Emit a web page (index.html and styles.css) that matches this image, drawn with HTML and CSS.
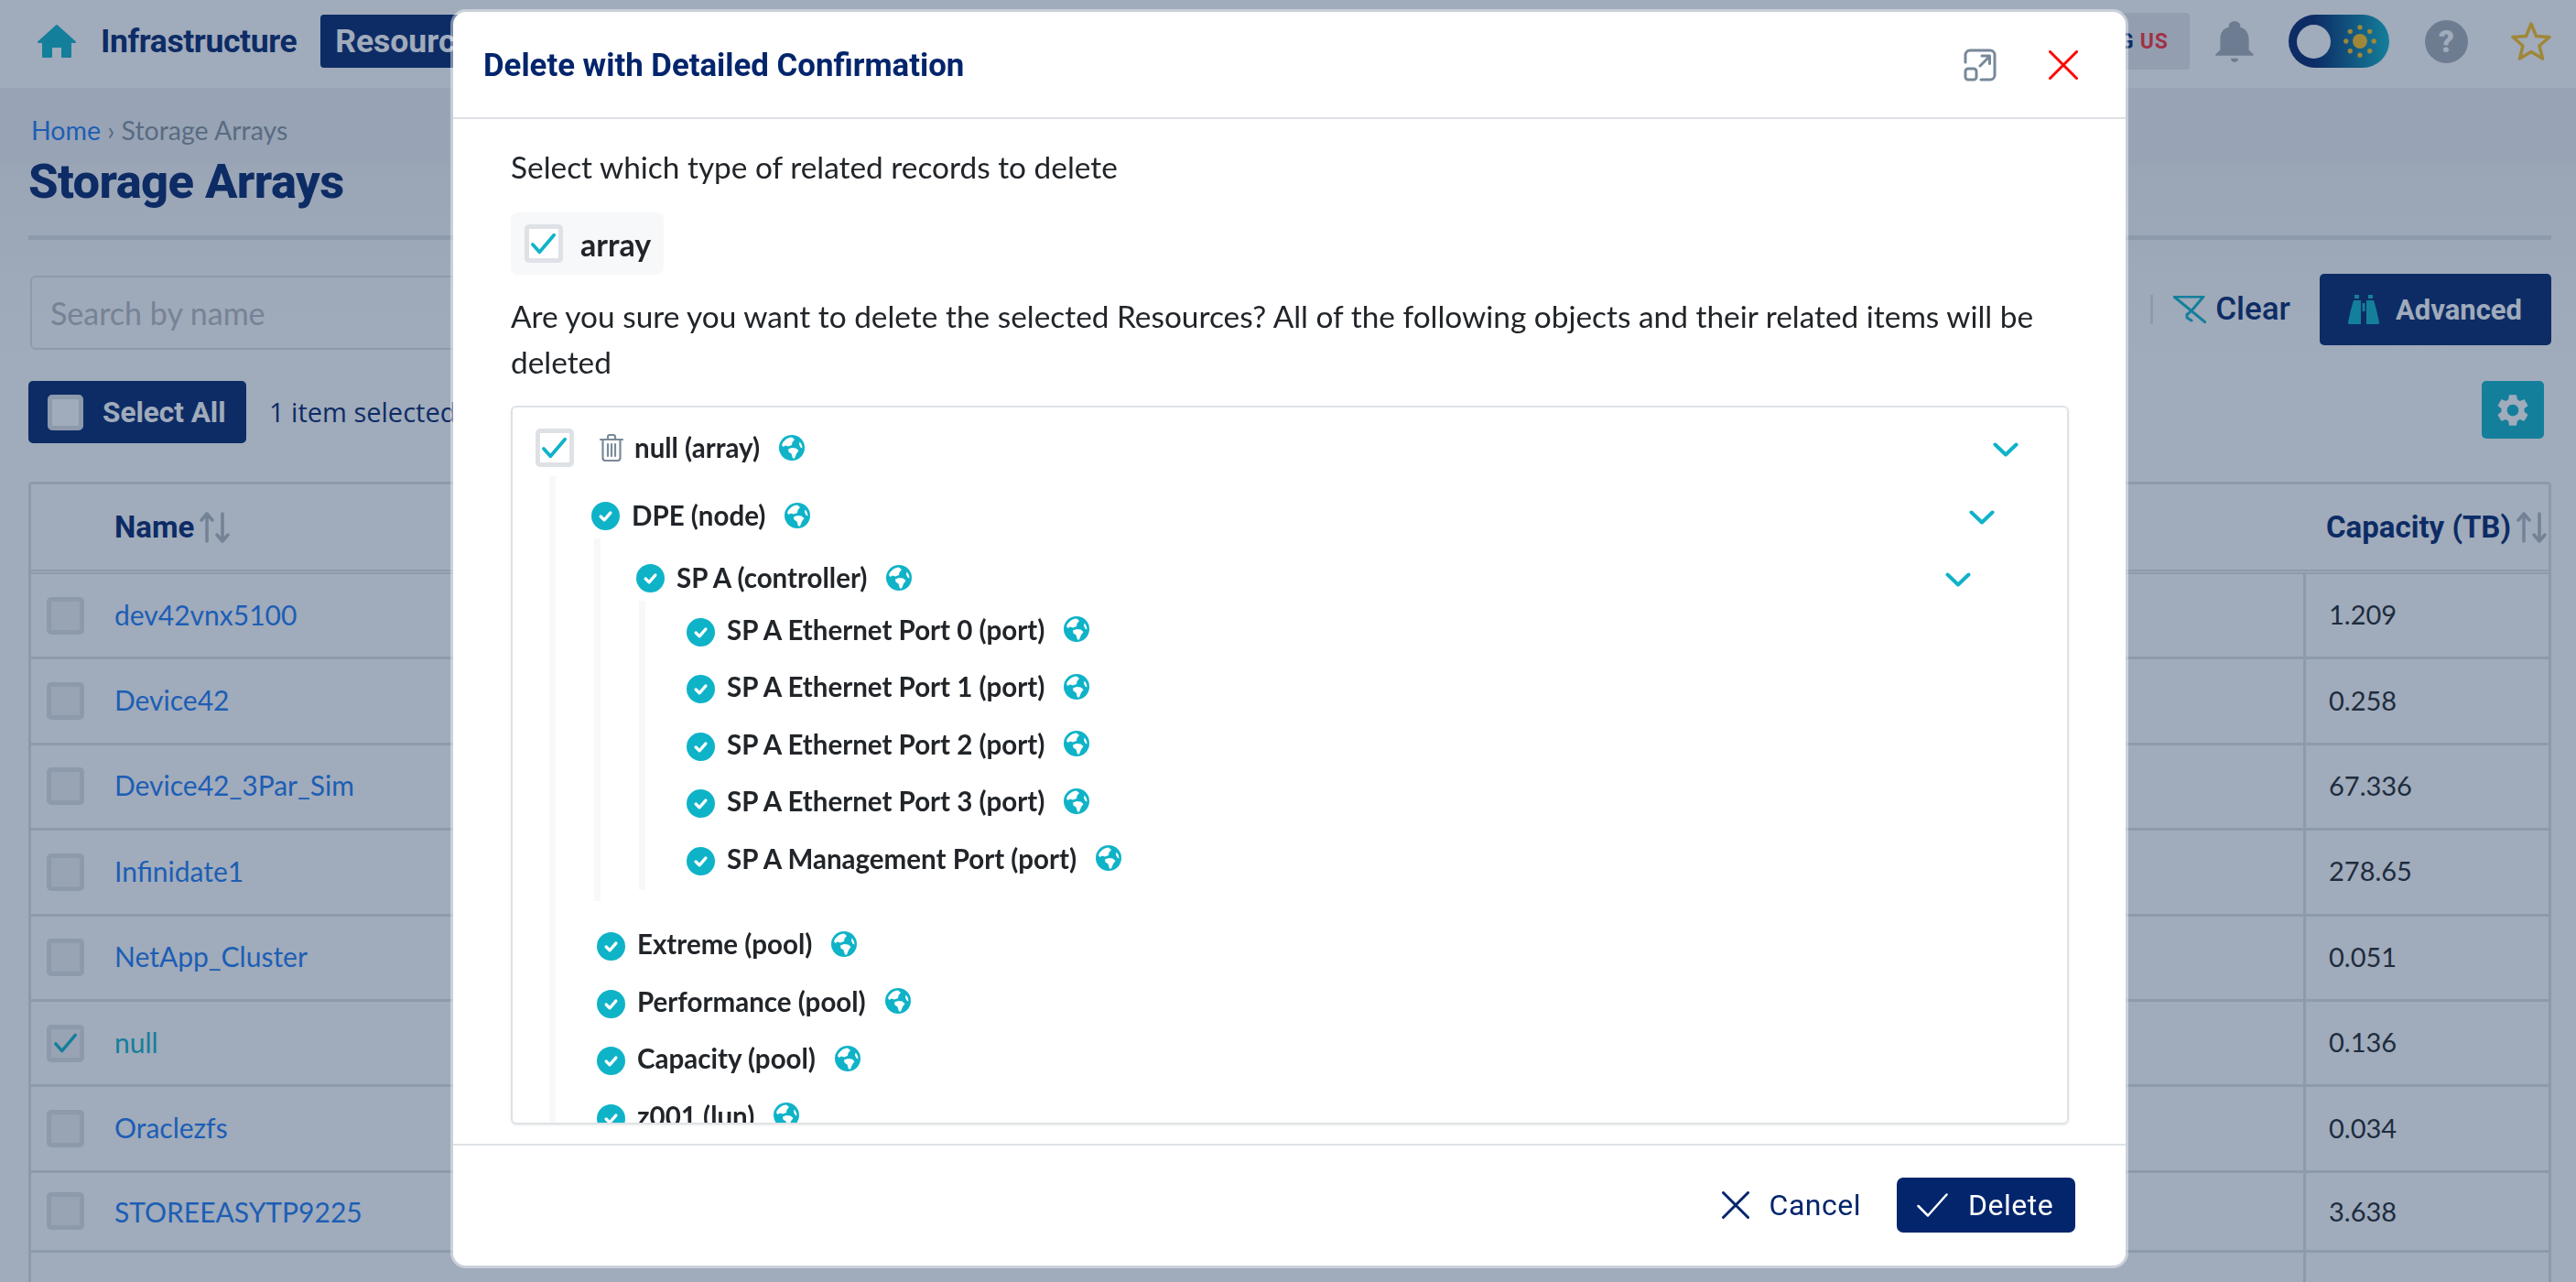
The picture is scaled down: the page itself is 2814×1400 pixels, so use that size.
FILE: index.html
```html
<!DOCTYPE html>
<html lang="en">
<head>
    <meta charset="UTF-8">
    <title>Storage Arrays</title>
    <link rel="stylesheet" href="styles.css">
</head>
<body>
    <!-- Shared icons -->
    <svg class="icon-defs" width="0" height="0">
        <symbol id="globe" viewBox="0 0 28 28">
            <circle cx="14" cy="14" r="14" fill="#0fb3c8"/>
            <path fill="#fff" d="M3 11C5 6 9 3 14 2.600L17 5 14.500 8 14 11 10 12.500 7 11.500 4.500 13zM10 15.500 14 14 18.500 14.500 21.500 17 19 20.500 17 25.500 15 25.500 13.500 20.500 10.500 18.500zM22.500 7.500C24.500 9.500 25.500 12 25.400 14.500L23.500 13.500 22 10.500z"/>
        </symbol>
        <symbol id="tick" viewBox="0 0 32 32">
            <circle cx="16" cy="16" r="16" fill="#0fb3c8"/>
            <path fill="none" stroke="#fff" stroke-width="3.400" stroke-linecap="round" stroke-linejoin="round" d="M10.500 16.500 14.500 20.500 21.500 12.500"/>
        </symbol>
        <symbol id="check" viewBox="0 0 32 28">
            <path fill="none" stroke="currentColor" stroke-width="4" stroke-linecap="round" stroke-linejoin="round" d="M3 15 11 24 28 4"/>
        </symbol>
        <symbol id="chevron" viewBox="0 0 28 16">
            <path fill="none" stroke="#0fb3c8" stroke-width="4" stroke-linecap="round" stroke-linejoin="round" d="M2.500 2.500 14 13.500 25.500 2.500"/>
        </symbol>
        <symbol id="sort" viewBox="0 0 34 36">
            <path fill="none" stroke="#b4b8c0" stroke-width="3.500" stroke-linecap="round" stroke-linejoin="round" d="M8 33V3M2 10 8 3 14 10M25 3V33M19 26 25 33 31 26"/>
        </symbol>
    </svg>

    <!-- Top bar -->
    <header class="topbar">
        <svg class="home-icon" viewBox="0 0 42 38"><path fill="#0fb3c8" stroke="#0fb3c8" stroke-width="2" stroke-linejoin="round" d="M21 2 41 20H36V36H27V25H15V36H6V20H1z"/></svg>
        <span class="app-name">Infrastructure</span>
        <span class="nav-active">Resources</span>
        <span class="locale"><span class="locale-lang">ENG</span> <span class="locale-code">US</span></span>
        <svg class="bell" viewBox="0 0 24 24"><path fill="#aaafb8" d="M12 23c1.100 0 2-.900 2-2h-4c0 1.100.890 2 2 2zm7.500-6.500V11c0-3.070-1.640-5.640-4.500-6.320V3.500c0-.830-1.200-2-3-2s-3 1.170-3 2v1.180C5.630 5.360 4.500 7.920 4.500 11v5.500L2 19v.500h20V19z"/></svg>
        <span class="theme-toggle">
            <span class="theme-knob"></span>
            <svg class="sun" viewBox="0 0 52 52" fill="#ffc21e">
                <circle cx="26" cy="26" r="11.500"/>
                <circle cx="26" cy="4" r="3.800"/><circle cx="26" cy="48" r="3.800"/><circle cx="4" cy="26" r="3.800"/><circle cx="48" cy="26" r="3.800"/>
                <circle cx="10.500" cy="10.500" r="3.800"/><circle cx="41.500" cy="10.500" r="3.800"/><circle cx="10.500" cy="41.500" r="3.800"/><circle cx="41.500" cy="41.500" r="3.800"/>
            </svg>
        </span>
        <span class="help">?</span>
        <svg class="star" viewBox="0 0 44 44"><path fill="none" stroke="#ffc21e" stroke-width="3.500" stroke-linejoin="round" d="M22 3 27.500 16.500 42 17.500 31 27 34.500 41 22 33.500 9.500 41 13 27 2 17.500 16.500 16.500z"/></svg>
    </header>

    <main class="page">
        <div class="page-head">
            <p class="crumbs"><a href="#">Home</a> › Storage Arrays</p>
            <h1>Storage Arrays</h1>
        </div>

        <div class="search-row">
            <div class="search-box">Search by name</div>
            <span class="search-sep"></span>
            <svg class="clear-icon" viewBox="0 0 36 30"><path fill="none" stroke="#0fb3c8" stroke-width="3" stroke-linecap="round" stroke-linejoin="round" d="M1 1H33L22 14 16 20M15 20V24L20 27M1 1 35 29"/></svg>
            <span class="clear-text">Clear</span>
            <button class="btn-advanced">
                <svg viewBox="0 0 34 32"><path fill="#0fb3c8" d="M7 0H12V4H7zM22 0H27V4H22zM6 6H14V32H1C0 32 0 31 0 30 2 20 4 12 6 6zM20 6H28C30 12 32 20 34 30 34 31 34 32 33 32H20zM15.500 9H18.500V18H15.500z"/></svg>
                Advanced
            </button>
        </div>

        <div class="select-row">
            <div class="select-all"><span class="select-box"></span>Select All</div>
            <span class="select-count">1 item selected</span>
            <button class="btn-gear">
                <svg viewBox="0 0 24 24"><path fill="#fff" d="M19.140 12.940c.040-.300.060-.610.060-.940 0-.320-.020-.640-.070-.940l2.030-1.580c.180-.140.230-.410.120-.610l-1.920-3.320c-.120-.220-.370-.290-.590-.220l-2.390.960c-.500-.380-1.030-.700-1.620-.940l-.360-2.540c-.040-.240-.240-.410-.480-.410h-3.840c-.240 0-.430.170-.470.410l-.360 2.540c-.590.240-1.130.570-1.620.940l-2.390-.960c-.220-.080-.470 0-.590.220L2.740 8.870c-.120.210-.080.470.120.610l2.030 1.580c-.050.300-.090.630-.090.940s.020.640.070.940l-2.030 1.580c-.180.140-.230.410-.12.610l1.920 3.320c.120.220.370.290.590.220l2.390-.960c.500.380 1.030.700 1.620.940l.360 2.540c.050.240.240.410.480.410h3.840c.240 0 .440-.170.470-.410l.360-2.540c.590-.240 1.130-.560 1.620-.940l2.390.960c.220.080.470 0 .590-.220l1.920-3.320c.120-.220.070-.470-.120-.610l-2.010-1.580zM12 15.600c-1.980 0-3.600-1.620-3.600-3.600s1.620-3.600 3.600-3.600 3.600 1.620 3.600 3.600-1.620 3.600-3.600 3.600z"/></svg>
            </button>
        </div>

        <!-- Arrays table -->
        <div class="table">
            <div class="row row-head">
                <div class="cell"></div>
                <div class="cell head-name">Name <svg class="sort"><use href="#sort"/></svg></div>
                <div class="cell head-cap">Capacity (TB) <svg class="sort"><use href="#sort"/></svg></div>
            </div>
            <div class="row"><div class="cell"><span class="box"></span></div><div class="cell"><a href="#">dev42vnx5100</a></div><div class="cell cap">1.209</div></div>
            <div class="row"><div class="cell"><span class="box"></span></div><div class="cell"><a href="#">Device42</a></div><div class="cell cap">0.258</div></div>
            <div class="row"><div class="cell"><span class="box"></span></div><div class="cell"><a href="#">Device42_3Par_Sim</a></div><div class="cell cap">67.336</div></div>
            <div class="row"><div class="cell"><span class="box"></span></div><div class="cell"><a href="#">Infinidate1</a></div><div class="cell cap">278.65</div></div>
            <div class="row"><div class="cell"><span class="box"></span></div><div class="cell"><a href="#">NetApp_Cluster</a></div><div class="cell cap">0.051</div></div>
            <div class="row"><div class="cell"><span class="box"><svg class="box-check"><use href="#check"/></svg></span></div><div class="cell"><a class="picked" href="#">null</a></div><div class="cell cap">0.136</div></div>
            <div class="row"><div class="cell"><span class="box"></span></div><div class="cell"><a href="#">Oraclezfs</a></div><div class="cell cap">0.034</div></div>
            <div class="row row-short"><div class="cell"><span class="box"></span></div><div class="cell"><a href="#">STOREEASYTP9225</a></div><div class="cell cap">3.638</div></div>
            <div class="row"><div class="cell"></div><div class="cell"></div><div class="cell cap"></div></div>
        </div>
    </main>

    <!-- Delete dialog -->
    <div class="backdrop">
        <div class="modal">
            <div class="modal-head">
                <h2>Delete with Detailed Confirmation</h2>
                <svg class="modal-expand" viewBox="0 0 36 36"><path fill="none" stroke="#78889a" stroke-width="3" stroke-linecap="round" stroke-linejoin="round" d="M2 15V7A5 5 0 0 1 7 2H29A5 5 0 0 1 34 7V29A5 5 0 0 1 29 34H19M18 19 28 9M20 8H28.500V16.500"/><rect x="2" y="22" width="12" height="12" rx="3" fill="none" stroke="#78889a" stroke-width="3"/></svg>
                <svg class="modal-close" viewBox="0 0 32 32"><path stroke="#f00" stroke-width="3" stroke-linecap="round" d="M1.500 1.500 30.500 30.500M30.500 1.500 1.500 30.500"/></svg>
            </div>

            <div class="modal-body">
                <p class="line">Select which type of related records to delete</p>
                <label class="type-chip"><span class="check-box"><svg><use href="#check"/></svg></span>array</label>
                <p class="line warning">Are you sure you want to delete the selected Resources? All of the following objects and their related items will be deleted</p>

                <div class="tree">
                    <div class="node node-root">
                        <span class="check-box check-box-root"><svg><use href="#check"/></svg></span>
                        <svg class="trash" viewBox="0 0 26 30"><path fill="none" stroke="#7a8a99" stroke-width="2.200" stroke-linecap="round" stroke-linejoin="round" d="M1 6H25M9 6V3A2 2 0 0 1 11 1H15A2 2 0 0 1 17 3V6M3.500 6V26A3 3 0 0 0 6.500 29H19.500A3 3 0 0 0 22.500 26V6M9 11V24M13 11V24M17 11V24"/></svg>
                        <span class="node-name">null (array)</span>
                        <svg class="globe"><use href="#globe"/></svg>
                        <svg class="chevron"><use href="#chevron"/></svg>
                    </div>
                    <div class="branch branch-top">
                        <div class="node node-parent">
                            <svg class="tick"><use href="#tick"/></svg>
                            <span class="node-name">DPE (node)</span>
                            <svg class="globe"><use href="#globe"/></svg>
                            <svg class="chevron"><use href="#chevron"/></svg>
                        </div>
                        <div class="branch branch-mid">
                            <div class="node node-parent">
                                <svg class="tick"><use href="#tick"/></svg>
                                <span class="node-name">SP A (controller)</span>
                                <svg class="globe"><use href="#globe"/></svg>
                                <svg class="chevron"><use href="#chevron"/></svg>
                            </div>
                            <div class="branch branch-leaf">
                                <div class="node"><svg class="tick"><use href="#tick"/></svg><span class="node-name">SP A Ethernet Port 0 (port)</span><svg class="globe"><use href="#globe"/></svg></div>
                                <div class="node"><svg class="tick"><use href="#tick"/></svg><span class="node-name">SP A Ethernet Port 1 (port)</span><svg class="globe"><use href="#globe"/></svg></div>
                                <div class="node"><svg class="tick"><use href="#tick"/></svg><span class="node-name">SP A Ethernet Port 2 (port)</span><svg class="globe"><use href="#globe"/></svg></div>
                                <div class="node"><svg class="tick"><use href="#tick"/></svg><span class="node-name">SP A Ethernet Port 3 (port)</span><svg class="globe"><use href="#globe"/></svg></div>
                                <div class="node"><svg class="tick"><use href="#tick"/></svg><span class="node-name">SP A Management Port (port)</span><svg class="globe"><use href="#globe"/></svg></div>
                            </div>
                        </div>
                        <div class="pools">
                            <div class="node"><svg class="tick"><use href="#tick"/></svg><span class="node-name">Extreme (pool)</span><svg class="globe"><use href="#globe"/></svg></div>
                            <div class="node"><svg class="tick"><use href="#tick"/></svg><span class="node-name">Performance (pool)</span><svg class="globe"><use href="#globe"/></svg></div>
                            <div class="node"><svg class="tick"><use href="#tick"/></svg><span class="node-name">Capacity (pool)</span><svg class="globe"><use href="#globe"/></svg></div>
                            <div class="node"><svg class="tick"><use href="#tick"/></svg><span class="node-name">z001 (lun)</span><svg class="globe"><use href="#globe"/></svg></div>
                        </div>
                    </div>
                </div>
            </div>

            <div class="modal-foot">
                <button class="btn-cancel">
                    <svg viewBox="0 0 30 30"><path stroke="#03256c" stroke-width="3" stroke-linecap="round" d="M1.500 1.500 28.500 28.500M28.500 1.500 1.500 28.500"/></svg>
                    Cancel
                </button>
                <button class="btn-delete">
                    <svg viewBox="0 0 34 26"><path fill="none" stroke="#fff" stroke-width="2.500" stroke-linecap="round" stroke-linejoin="round" d="M1.500 14 12 24.500 32.500 1.500"/></svg>
                    Delete
                </button>
            </div>
        </div>
    </div>
</body>
</html>
```
FILE: styles.css
```css
/* Basic styling for the entire page */
* {
    margin: 0;
    padding: 0;
    box-sizing: border-box;
}

html, body {
    height: 100%;
    overflow: hidden;
}

body {
    background: #fff;
    color: #212529;
    font-family: "Lato", sans-serif;
}

a {
    color: #1c7bf5;
    text-decoration: none;
}

button {
    border: 0;
    background: none;
    font: inherit;
}

.icon-defs {
    position: absolute;
}

/* Top bar */
.topbar {
    height: 96px;
    display: flex;
    align-items: center;
    padding: 0 27px 6px 41px;
    background: #fff;
    font-family: "Roboto", sans-serif;
}

.home-icon {
    width: 42px;
    height: 38px;
    margin-right: 27px;
}

.app-name {
    color: #03256c;
    font-size: 35.5px;
    font-weight: 700;
    letter-spacing: -0.4px;
}

.nav-active {
    margin-left: 26px;
    height: 58px;
    padding: 0 16px;
    display: flex;
    align-items: center;
    background: #03256c;
    border-radius: 4px;
    color: #fff;
    font-size: 35.5px;
    font-weight: 700;
}

.locale {
    margin-left: auto;
    height: 62px;
    width: 200px;
    padding-right: 23px;
    display: flex;
    align-items: center;
    justify-content: flex-end;
    gap: 6px;
    background: #e9e8ec;
    border-radius: 4px;
    font-size: 23px;
    font-weight: 700;
    letter-spacing: 1px;
}

.locale-lang {
    color: #03256c;
}

.locale-code {
    color: #ff2d36;
}

.bell {
    width: 50px;
    height: 52px;
    margin-left: 24px;
}

.theme-toggle {
    width: 110px;
    height: 58px;
    margin-left: 34px;
    padding: 0 9px;
    display: flex;
    align-items: center;
    justify-content: space-between;
    background: linear-gradient(90deg, #03256c 25%, #0fb3c8 100%);
    border-radius: 29px;
}

.theme-knob {
    width: 37px;
    height: 37px;
    border-radius: 50%;
    background: #fff;
}

.sun {
    width: 36px;
    height: 36px;
    margin-right: 5px;
}

.help {
    width: 47px;
    height: 47px;
    margin-left: 39px;
    border-radius: 50%;
    background: #aaafb8;
    color: #fff;
    font-size: 33px;
    font-weight: 900;
    line-height: 47px;
    text-align: center;
}

.star {
    width: 44px;
    height: 44px;
    margin-left: 47px;
}

/* Page content */
.page {
    padding: 0 27px 0 31px;
    background: linear-gradient(180deg, #f2f2f4 84px, #f5f5f6 84px, #fff 300px);
}

.page-head {
    padding-top: 28px;
    height: 166px;
    border-bottom: 5px solid #dee2e6;
}

.crumbs {
    padding-left: 3px;
    color: #86929d;
    font-size: 28.5px;
    line-height: 36px;
}

h1 {
    margin-top: 6px;
    color: #03256c;
    font-family: "Roboto", sans-serif;
    font-size: 52.5px;
    font-weight: 800;
    line-height: 64px;
    letter-spacing: -0.6px;
}

/* Search row */
.search-row {
    margin-top: 37px;
    height: 83px;
    display: flex;
    align-items: flex-start;
}

.search-box {
    margin: 2px 0 0 2px;
    flex: 1;
    height: 81px;
    padding-left: 20px;
    display: flex;
    align-items: center;
    border: 2px solid #dee2e6;
    border-radius: 6px;
    color: #b8b9bf;
    font-size: 34px;
}

.search-sep {
    width: 3px;
    height: 32px;
    margin: 23px 22px 0 29px;
    background: #dee2e6;
}

.clear-icon {
    width: 36px;
    height: 30px;
    margin: 24px 10px 0 0;
}

.clear-text {
    margin-top: 17px;
    color: #03256c;
    font-family: "Roboto", sans-serif;
    font-size: 35px;
    font-weight: 500;
    line-height: 44px;
}

.btn-advanced {
    width: 253px;
    height: 78px;
    margin-left: 32px;
    padding-left: 31px;
    display: flex;
    align-items: center;
    gap: 18px;
    background: #03256c;
    border-radius: 5px;
    color: #fff;
    font-family: "Roboto", sans-serif;
    font-size: 31px;
    font-weight: 700;
}

.btn-advanced svg {
    width: 34px;
    height: 32px;
}

/* Select row */
.select-row {
    margin-top: 34px;
    display: flex;
    align-items: flex-start;
}

.select-all {
    width: 238px;
    height: 68px;
    padding-left: 21px;
    display: flex;
    align-items: center;
    gap: 21px;
    background: #03256c;
    border-radius: 5px;
    color: #fff;
    font-family: "Roboto", sans-serif;
    font-size: 31.5px;
    font-weight: 700;
}

.select-box {
    width: 39px;
    height: 39px;
    background: #fff;
    border: 5px solid #dee2e6;
    border-radius: 5px;
}

.select-count {
    margin: 14px 0 0 25px;
    color: #03256c;
    font-family: "Open Sans", sans-serif;
    font-size: 29px;
    line-height: 40px;
}

.btn-gear {
    width: 68px;
    height: 63px;
    margin-left: auto;
    margin-right: 8px;
    display: flex;
    align-items: center;
    justify-content: center;
    background: #0fb3c8;
    border-radius: 5px;
}

.btn-gear svg {
    width: 42px;
    height: 42px;
}

/* Arrays table */
.table {
    margin-top: 42px;
    border: 3px solid #dee2e6;
    border-bottom: 0;
    border-radius: 4px 4px 0 0;
}

.row {
    height: 93.4px;
    display: grid;
    grid-template-columns: 91px 1fr 268px;
    border-bottom: 3px solid #dee2e6;
    font-size: 30px;
}

.row-head {
    height: 98px;
    border-bottom: 5px double #dee2e6;
}

.row-short {
    height: 87px;
}

.cell {
    display: flex;
    align-items: center;
    padding-left: 17px;
}

.cell:nth-child(2) {
    padding-left: 0;
}

.cell a {
    margin-bottom: 3px;
}

.head-name,
.head-cap {
    gap: 6px;
    color: #03256c;
    font-family: "Roboto", sans-serif;
    font-size: 33px;
    font-weight: 700;
}

.head-cap {
    padding-left: 25px;
    white-space: nowrap;
}

.sort {
    width: 34px;
    height: 36px;
}

.cap {
    padding: 0 0 3px 25px;
    border-left: 3px solid #dee2e6;
    color: #212529;
    font-size: 29px;
}

.row-short .cell a {
    margin-bottom: 0;
}

.row-short .cap {
    padding-bottom: 0;
}

.box {
    width: 41px;
    height: 41px;
    display: flex;
    align-items: center;
    justify-content: center;
    background: #f1f1f3;
    border: 5px solid #dee2e6;
    border-radius: 5px;
}

.box-check {
    width: 30px;
    height: 24px;
    color: #0fb3c8;
}

.picked {
    color: #0fb3c8;
}

/* Delete dialog */
.backdrop {
    position: fixed;
    inset: 0;
    background: rgba(29, 56, 94, 0.42);
}

.modal {
    width: 1827px;
    height: 1369px;
    margin: 13px 0 0 495px;
    display: flex;
    flex-direction: column;
    background: #fff;
    border-radius: 14px;
    box-shadow: 0 0 0 3px rgba(255, 255, 255, 0.45);
}

.modal-head {
    height: 117px;
    padding: 0 52px 0 33px;
    display: flex;
    align-items: center;
    border-bottom: 2px solid #dee2e6;
}

.modal-head h2 {
    margin-right: auto;
    color: #03256c;
    font-family: "Roboto", sans-serif;
    font-size: 34.8px;
    font-weight: 700;
}

.modal-expand {
    width: 36px;
    height: 36px;
}

.modal-close {
    width: 32px;
    height: 32px;
    margin-left: 57px;
}

.modal-body {
    flex: 1;
    padding: 27px 62px 0 63px;
}

.line {
    font-size: 33.4px;
    line-height: 50px;
    color: #212529;
}

.warning {
    margin-top: 20px;
}

.type-chip {
    width: 167px;
    height: 68px;
    margin-top: 25px;
    padding-left: 15px;
    display: flex;
    align-items: center;
    gap: 19px;
    background: #f6f8fa;
    border-radius: 8px;
    font-size: 34px;
    font-weight: 700;
}

.check-box {
    width: 42px;
    height: 42px;
    display: flex;
    align-items: center;
    justify-content: center;
    flex-shrink: 0;
    background: #fff;
    border: 5px solid #dee2e6;
    border-radius: 5px;
    color: #0fb3c8;
}

.check-box svg {
    width: 30px;
    height: 26px;
}

/* Tree of related objects */
.tree {
    height: 785px;
    margin-top: 23px;
    padding: 17px 0 0 25px;
    overflow: hidden;
    border: 2px solid #dee2e6;
    border-radius: 6px;
    box-shadow: 0 1px 3px rgba(0, 0, 0, 0.08);
}

.node {
    height: 62.5px;
    display: flex;
    align-items: center;
}

.node-root {
    height: 54px;
    padding-right: 53px;
}

.node-parent {
    height: 50px;
}

.node-name {
    margin: 0 21px 6px 13px;
    font-size: 29.5px;
    font-weight: 700;
    white-space: nowrap;
}

.node-root .node-name,
.node-parent .node-name {
    margin-bottom: 1px;
}

.trash {
    width: 26px;
    height: 30px;
    margin-left: 28px;
    margin-right: -1px;
}

.globe {
    width: 28px;
    height: 28px;
    flex-shrink: 0;
    margin-bottom: 6px;
}

.node-root .globe,
.node-parent .globe {
    margin-bottom: 1px;
}

.tick {
    width: 31px;
    height: 31px;
    flex-shrink: 0;
}

.chevron {
    width: 28px;
    height: 16px;
    margin: 3px 0 0 auto;
}

.branch {
    border-left: 7px solid #f6f8fa;
    padding-top: 18px;
}

.branch-top {
    margin: 4px 0 0 15px;
    padding-left: 39px;
    padding-right: 26px;
}

.node-root + .branch-top {
    padding-right: 79px;
}

.branch-mid {
    margin-left: 3px;
    padding-left: 39px;
    padding-right: 26px;
    padding-bottom: 12px;
}

.branch-leaf {
    margin-left: 3px;
    padding: 3px 0 0 45px;
}

.pools {
    margin: 19px 0 0 6px;
}

/* Dialog footer */
.modal-foot {
    height: 133px;
    padding: 35px 55px 0 0;
    display: flex;
    align-items: flex-start;
    justify-content: flex-end;
    gap: 39px;
    border-top: 2px solid #dee2e6;
    font-family: "Roboto", sans-serif;
    font-size: 32px;
}

.btn-cancel,
.btn-delete {
    height: 60px;
    display: flex;
    align-items: center;
    gap: 22px;
    letter-spacing: 0.5px;
}

.btn-cancel {
    color: #03256c;
}

.btn-cancel svg {
    width: 30px;
    height: 30px;
}

.btn-delete {
    width: 195px;
    padding-left: 22px;
    background: #03256c;
    border-radius: 7px;
    color: #fff;
}

.btn-delete svg {
    width: 34px;
    height: 26px;
}
```
